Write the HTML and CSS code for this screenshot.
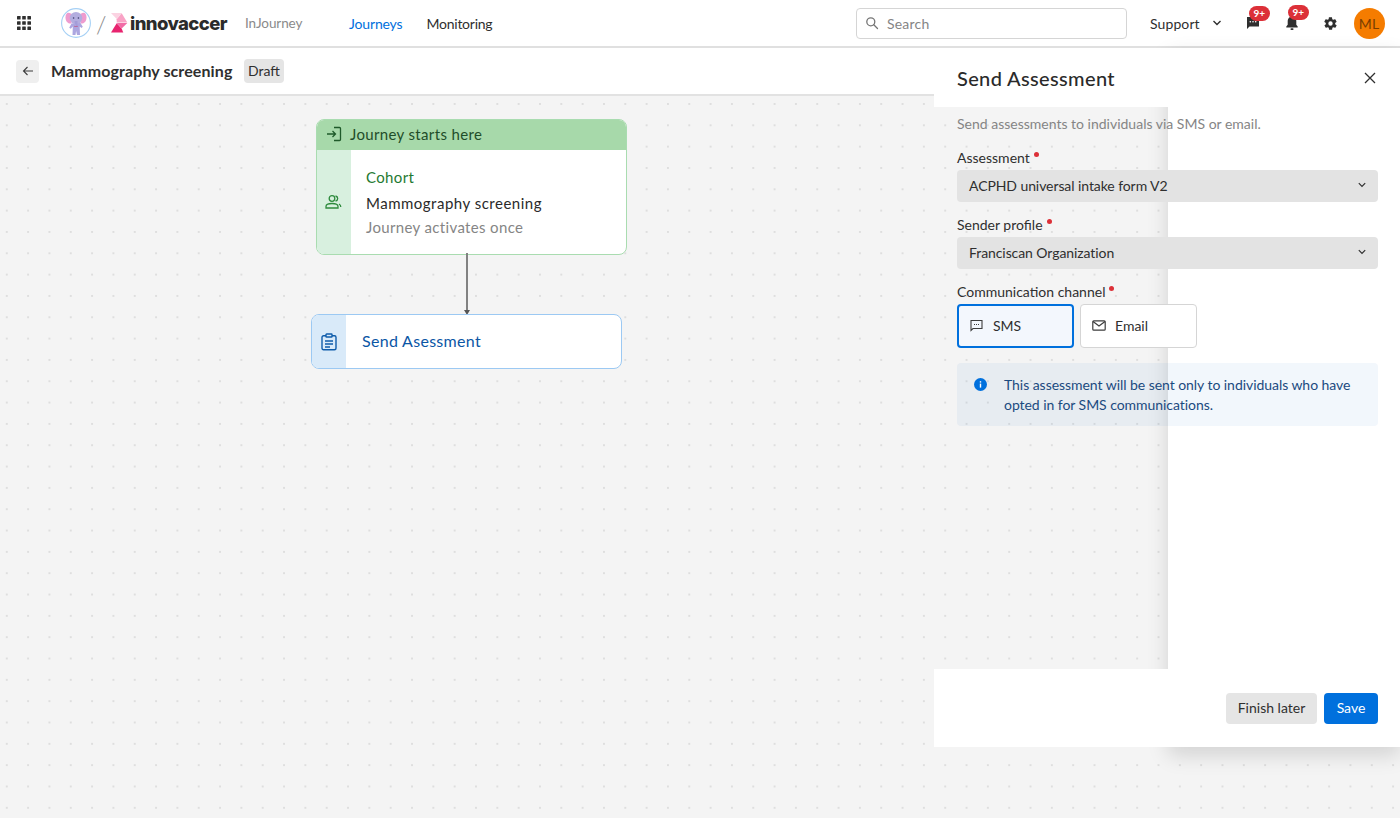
FILE: index.html
```html
<!DOCTYPE html>
<html lang="en">
<head>
<meta charset="utf-8">
<title>Mammography screening</title>
<link rel="stylesheet" href="styles.css">
</head>
<body>
<div class="app">
  <header class="topbar">
    <svg class="apps" width="14" height="14" viewBox="0 0 14 14"><g fill="#2f2f2f"><rect width="3.6" height="3.6" rx=".5"/><rect x="5.2" width="3.6" height="3.6" rx=".5"/><rect x="10.4" width="3.6" height="3.6" rx=".5"/><rect y="5.2" width="3.6" height="3.6" rx=".5"/><rect x="5.2" y="5.2" width="3.6" height="3.6" rx=".5"/><rect x="10.4" y="5.2" width="3.6" height="3.6" rx=".5"/><rect y="10.4" width="3.6" height="3.6" rx=".5"/><rect x="5.2" y="10.4" width="3.6" height="3.6" rx=".5"/><rect x="10.4" y="10.4" width="3.6" height="3.6" rx=".5"/></g></svg>
    <svg class="mascot" width="30" height="30" viewBox="0 0 30 30"><circle cx="15" cy="15" r="14.4" fill="#fff" stroke="#a5d0f5" stroke-width="1.100"/><path d="M10.500 6C7 3.500 4.500 5 4.500 9.500c0 4 2.500 6.500 6 6z" fill="#ee9ccf"/><path d="M19.500 6c3.500-2.500 6-1 6 3.500 0 4-2.500 6.500-6 6z" fill="#ee9ccf"/><path d="M10.500 15.500l-2.300 4.300 1.600 1 2-2.300-.3 8.500h3l.6-4 .9 4h3l-.3-8.500 1.800 1.500 1.300-1.200-2.800-4.500z" fill="#aca6e0"/><ellipse cx="15" cy="10" rx="6.300" ry="6" fill="#b3addf"/><path d="M13.500 13h3v3.500c0 1-.6 1.500-1.500 1.500v-1.500h-1z" fill="#a39cd8"/><circle cx="12.600" cy="10" r=".8" fill="#3b3b6b"/><circle cx="17.400" cy="10" r=".8" fill="#3b3b6b"/><path d="M13.500 17.800l1.500.5 1.500-.5v1.200l-1.500-.4-1.500.4z" fill="#c8406f"/></svg>
    <span class="slash">/</span>
    <svg class="mark" width="18" height="20" viewBox="0 0 18 20"><polygon points="1,0 11.700,0 6.700,6" fill="#fbd3e2"/><polygon points="6.700,6.300 11.700,.3 17.300,9.500 6.700,9.500" fill="#f9a3c6"/><polygon points="6.700,10 17.300,10 11.700,15.500" fill="#f26ca7"/><polygon points="1,19.500 6.700,10.300 11.700,15.800 13.300,19.500" fill="#e8246f"/></svg>
    <span class="wordmark">innovaccer</span>
    <span class="product">InJourney</span>
    <nav class="nav">
      <a class="nav-link nav-active">Journeys</a>
      <a class="nav-link">Monitoring</a>
    </nav>
    <div class="search">
      <svg width="14" height="14" viewBox="0 0 14 14" fill="none" stroke="#757575" stroke-width="1.300"><circle cx="5.800" cy="5.800" r="4"/><path d="M8.800 8.800l3.700 3.700" stroke-linecap="round"/></svg>
      <span>Search</span>
    </div>
    <div class="support">
      <span>Support</span>
      <svg width="10" height="6" viewBox="0 0 10 6" fill="none" stroke="#2f2f2f" stroke-width="1.400"><path d="M1.500 1l3.500 3.500L8.500 1"/></svg>
    </div>
    <div class="tool tool-chat">
      <svg width="14" height="14" viewBox="0 0 14 14"><path d="M1 1h12v9.500H3.500L1 13z" fill="#2f2f2f"/><circle cx="4.300" cy="5.800" r=".8" fill="#fff"/><circle cx="7" cy="5.800" r=".8" fill="#fff"/><circle cx="9.700" cy="5.800" r=".8" fill="#fff"/></svg>
      <span class="badge">9+</span>
    </div>
    <div class="tool tool-bell">
      <svg width="14" height="16" viewBox="0 0 14 16"><path d="M7 1.500a4.300 4.300 0 0 0-4.300 4.300v4L1.300 11.500v1h11.400v-1l-1.400-1.700v-4A4.300 4.300 0 0 0 7 1.500z" fill="#2f2f2f"/><rect x="5.500" y="13.300" width="3" height="1.700" rx=".8" fill="#2f2f2f"/></svg>
      <span class="badge">9+</span>
    </div>
    <div class="tool tool-gear">
      <svg width="15" height="15" viewBox="0 0 24 24"><path fill="#2f2f2f" d="M19.400 13c.1-.3.100-.7.100-1s0-.7-.1-1l2.100-1.600c.2-.2.300-.4.100-.7l-2-3.400c-.1-.2-.4-.3-.6-.2l-2.500 1c-.5-.4-1.100-.7-1.700-1l-.4-2.600c0-.3-.2-.5-.5-.5h-4c-.3 0-.5.200-.5.500l-.4 2.600c-.6.300-1.200.6-1.700 1l-2.500-1c-.2-.1-.5 0-.6.200l-2 3.400c-.1.300-.1.500.1.700L4.600 11c-.1.300-.1.700-.1 1s0 .7.100 1l-2.100 1.600c-.2.200-.3.400-.1.700l2 3.400c.1.200.4.300.6.200l2.500-1c.5.400 1.100.7 1.700 1l.4 2.600c0 .3.200.5.500.5h4c.3 0 .5-.2.500-.5l.4-2.600c.6-.3 1.200-.6 1.700-1l2.500 1c.2.100.5 0 .6-.2l2-3.400c.1-.3.100-.5-.1-.7zM12 15.500a3.500 3.500 0 1 1 0-7 3.500 3.500 0 0 1 0 7z"/></svg>
    </div>
    <div class="avatar">ML</div>
  </header>

  <div class="subbar">
    <button class="back">
      <svg width="12" height="12" viewBox="0 0 12 12" fill="none" stroke="#3d3d3d" stroke-width="1.100"><path d="M11 6H1.500M5.500 2L1.500 6l4 4"/></svg>
    </button>
    <h1 class="page-title">Mammography screening</h1>
    <span class="chip">Draft</span>
  </div>

  <main class="canvas">
    <section class="node node-start">
      <div class="node-head">
        <svg width="16" height="16" viewBox="0 0 16 16" fill="none" stroke="#1f5a2a" stroke-width="1.300"><path d="M1 8h8.500M6.500 5l3 3-3 3"/><path d="M8 1.500h5.500a1 1 0 0 1 1 1v11a1 1 0 0 1-1 1H8"/></svg>
        <span>Journey starts here</span>
      </div>
      <div class="node-main">
        <div class="node-side side-green">
          <svg width="17" height="14" viewBox="0 0 17 14" fill="none" stroke="#2e8b3d" stroke-width="1.300"><circle cx="7" cy="3.500" r="2.800"/><path d="M1 13v-1.500C1 9.500 3 8.500 7 8.500s6 1 6 3V13z"/><path d="M10.500 1c1.500.3 2.200 1.300 2.200 2.500s-.7 2.200-2.200 2.500M14 9c1 .5 1.800 1.500 1.800 3"/></svg>
        </div>
        <div class="node-body">
          <div class="cohort">Cohort</div>
          <div class="cohort-name">Mammography screening</div>
          <div class="cohort-note">Journey activates once</div>
        </div>
      </div>
    </section>
    <div class="connector"></div>
    <section class="node node-send">
      <div class="node-side side-blue">
        <svg width="16" height="18" viewBox="0 0 16 18" fill="none" stroke="#0f5cab" stroke-width="1.400"><rect x="1" y="2.800" width="14" height="14" rx="1.500"/><rect x="5" y="1" width="6" height="3" rx=".6" fill="#d9eaf9"/><path d="M4 8h8M4 11h8M4 14h5"/></svg>
      </div>
      <div class="send-label">Send Asessment</div>
    </section>
  </main>

  <aside class="panel">
    <div class="panel-head">
      <h2 class="panel-title">Send Assessment</h2>
      <svg width="12" height="12" viewBox="0 0 12 12" fill="none" stroke="#2f2f2f" stroke-width="1.300"><path d="M1 1l10 10M11 1L1 11"/></svg>
    </div>
    <div class="panel-body">
      <p class="panel-desc">Send assessments to individuals via SMS or email.</p>
      <div class="field">
        <label class="label">Assessment<i class="req"></i></label>
        <div class="select"><span>ACPHD universal intake form V2</span><svg width="8" height="6" viewBox="0 0 8 6" fill="none" stroke="#2f2f2f" stroke-width="1.200"><path d="M.8 1.200L4 4.400l3.200-3.200"/></svg></div>
      </div>
      <div class="field">
        <label class="label">Sender profile<i class="req"></i></label>
        <div class="select"><span>Franciscan Organization</span><svg width="8" height="6" viewBox="0 0 8 6" fill="none" stroke="#2f2f2f" stroke-width="1.200"><path d="M.8 1.200L4 4.400l3.200-3.200"/></svg></div>
      </div>
      <div class="field">
        <label class="label">Communication channel<i class="req"></i></label>
        <div class="tiles">
          <div class="tile tile-on">
            <svg width="13" height="13" viewBox="0 0 13 13" fill="none" stroke="#3d3d3d" stroke-width="1.100"><path d="M1 1.500h11v8H3L1 11.500z"/><path d="M4 5.500h1M6 5.500h1M8 5.500h1"/></svg>
            <span>SMS</span>
          </div>
          <div class="tile">
            <svg width="14" height="11" viewBox="0 0 14 11" fill="none" stroke="#3d3d3d" stroke-width="1.200"><rect x=".8" y=".8" width="12.400" height="9.400" rx="1"/><path d="M1 1.500l6 4.500 6-4.500"/></svg>
            <span>Email</span>
          </div>
        </div>
      </div>
      <div class="info">
        <svg width="13" height="13" viewBox="0 0 13 13"><circle cx="6.500" cy="6.500" r="6.500" fill="#0070dd"/><rect x="5.800" y="5.600" width="1.400" height="4" fill="#fff"/><rect x="5.800" y="3.200" width="1.400" height="1.400" fill="#fff"/></svg>
        <p>This assessment will be sent only to individuals who have opted in for SMS communications.</p>
      </div>
    </div>
    <div class="panel-foot">
      <button class="btn btn-soft">Finish later</button>
      <button class="btn btn-primary">Save</button>
    </div>
  </aside>
</div>
</body>
</html>
```

FILE: styles.css
```css
* { box-sizing: border-box; }
html, body { margin: 0; height: 100%; }
body {
  font-family: "Lato", "Noto Sans", sans-serif;
  font-size: 14px;
  color: #2f2f2f;
  overflow: hidden;
}
.app { position: relative; width: 1400px; height: 818px; display: flex; flex-direction: column; background: #f4f4f4; }

.topbar {
  height: 48px; flex: none; background: #fff; border-bottom: 2px solid #e0e0e0;
  display: flex; align-items: center; padding-left: 17px; position: relative; z-index: 1;
}
.mascot { margin-left: 30px; flex: none; }
.slash { margin-left: 5px; width: 10px; text-align: center; font-size: 24px; color: #8a8a8a; font-weight: 300; }
.mark { margin-left: 4px; flex: none; }
.wordmark { margin-left: 2px; width: 98px; white-space: nowrap; font-family: "Inter", sans-serif; font-weight: 800; font-size: 18.500px; letter-spacing: -0.600px; color: #2b2b2b; }
.product { margin-left: 17px; width: 104px; color: #8a8a8a; font-size: 13.500px; letter-spacing: -.1px; }
.nav { display: flex; gap: 24px; width: 507px; }
.nav-link { color: #2f2f2f; letter-spacing: -.25px; }
.nav-active { color: #0070dd; letter-spacing: -.15px; }
.search {
  width: 271px; height: 31px; border: 1px solid #d5d5d5; border-radius: 4px;
  display: flex; align-items: center; gap: 8px; padding-left: 8px; color: #858585; letter-spacing: .2px;
}
.support { margin-left: 23px; display: flex; align-items: center; gap: 12px; letter-spacing: .1px; }
.tool { position: relative; display: flex; align-items: center; justify-content: center; }
.tool-chat { margin-left: 24px; }
.tool-bell { margin-left: 25px; }
.tool-gear { margin-left: 24px; }
.badge {
  position: absolute; left: 3px; top: -10px; width: 21px; height: 15px; border-radius: 8px;
  background: #dc3038; color: #fff; font-size: 10px; font-weight: 700; line-height: 15px; text-align: center;
}
.avatar {
  margin-left: 16px; width: 31px; height: 31px; border-radius: 50%; background: #f57c00;
  color: #7a3e00; display: flex; align-items: center; justify-content: center; font-size: 14px; letter-spacing: .3px;
}

.subbar {
  height: 48px; flex: none; background: #fff; border-bottom: 2px solid #e2e2e2;
  display: flex; align-items: center; padding-left: 16px;
}
.back {
  width: 23px; height: 23px; padding: 0; border: 0; border-radius: 4px; background: #efefef;
  display: flex; align-items: center; justify-content: center;
}
.page-title { margin: 0 0 2px 12px; font-size: 16px; font-weight: 700; color: #2f2f2f; letter-spacing: .1px; width: 181px; white-space: nowrap; }
.chip {
  margin-left: 12px; width: 40px; height: 24px; border-radius: 4px; background: #e5e5e5; padding-bottom: 2px;
  display: flex; align-items: center; justify-content: center; font-size: 14px;
}

.canvas {
  flex: 1; position: relative;
  background-color: #f4f4f4;
  background-image: radial-gradient(circle, #dedede 1px, transparent 1.200px);
  background-size: 21.330px 21.330px;
  background-position: -3.900px -2.700px;
}
.node { position: absolute; background: #fff; overflow: hidden; }
.node-start { left: 316px; top: 23px; width: 311px; height: 136px; border: 1px solid #a9dcb0; border-radius: 8px; }
.node-head {
  height: 30px; background: #a7d9aa; display: flex; align-items: center; gap: 8px; padding: 0 0 2px 9px;
  color: #1f4d29; font-size: 15px; letter-spacing: .35px;
}
.node-main { display: flex; height: 104px; }
.node-side { flex: none; width: 34px; display: flex; align-items: center; justify-content: center; }
.side-green { background: #d8f0df; padding-right: 2px; }
.side-blue { background: #d9eaf9; }
.node-body { padding: 17px 0 0 15px; display: flex; flex-direction: column; font-size: 15px; letter-spacing: .35px; }
.cohort { color: #1f7a32; line-height: 20px; }
.cohort-name { color: #2a2a2a; line-height: 20px; margin-top: 6px; letter-spacing: .5px; }
.cohort-note { color: #858585; line-height: 20px; margin-top: 4px; }
.connector {
  position: absolute; left: 466px; top: 157px; width: 2px; height: 60px; background: #828282;
}
.connector::after {
  content: ""; position: absolute; left: -2px; bottom: -2px;
  border-left: 3px solid transparent; border-right: 3px solid transparent; border-top: 5px solid #555;
}
.node-send { left: 311px; top: 218px; width: 311px; height: 55px; border: 1px solid #9cc9f3; border-radius: 8px; display: flex; }
.send-label { padding: 0 0 2px 16px; align-self: center; color: #0b56a5; font-size: 16px; letter-spacing: .3px; }

.panel {
  position: absolute; left: 934px; top: 48px; width: 466px; height: 699px;
  display: flex; flex-direction: column; z-index: 2;
}
.panel::before {
  content: ""; position: absolute; left: 234px; right: 0; top: 0; bottom: 0; background: #fff;
  box-shadow: 0 8px 20px rgba(0,0,0,.14);
}
.panel-head {
  position: relative; height: 59px; flex: none; background: #fff;
  display: flex; align-items: center; justify-content: space-between; padding: 0 24px 0 23px;
}
.panel-title { margin: 0; font-size: 20px; font-weight: 500; letter-spacing: .35px; color: #2a2a2a; }
.panel-body { position: relative; flex: 1; padding: 0 22px 0 23px; }
.panel-desc { margin: 8px 0 15px; line-height: 18px; color: #858585; }
.field { margin-top: 13px; }
.label { display: block; height: 20px; line-height: 20px; color: #2f2f2f; margin-bottom: 2px; }
.req { display: inline-block; width: 5px; height: 5px; border-radius: 50%; background: #dc3038; margin-left: 4px; vertical-align: 6px; }
.select {
  height: 32px; border-radius: 4px; background: #e3e3e3; display: flex; align-items: center;
  justify-content: space-between; padding: 0 12px 2px; letter-spacing: -.08px;
}
.tiles { display: flex; gap: 6px; }
.tile {
  width: 117px; height: 44px; border: 1px solid #d5d5d5; border-radius: 4px; background: #fff;
  display: flex; align-items: center; gap: 9px; padding: 0 0 2px 11px;
}
.tile-on { border: 2px solid #0070dd; background: #f3f7fd; gap: 10px; }
.info {
  margin-top: 15px; height: 63px; border-radius: 4px; background: rgba(0,100,200,.05);
  display: flex; gap: 17px; padding: 12px 20px 0 17px; color: #1b4a80;
}
.info svg { flex: none; margin-top: 3px; }
.info p { margin: 0; line-height: 20px; letter-spacing: -.05px; }
.panel-foot {
  position: relative; height: 78px; flex: none; background: #fff;
  display: flex; justify-content: flex-end; align-items: flex-start; gap: 7px; padding: 24px 22px 0 0;
}
.btn { height: 31px; border: 0; border-radius: 4px; font: inherit; padding: 0 0 2px; }
.btn-soft { width: 91px; background: #e5e5e5; color: #2f2f2f; }
.btn-primary { width: 54px; background: #0070dd; color: #fff; }
```
